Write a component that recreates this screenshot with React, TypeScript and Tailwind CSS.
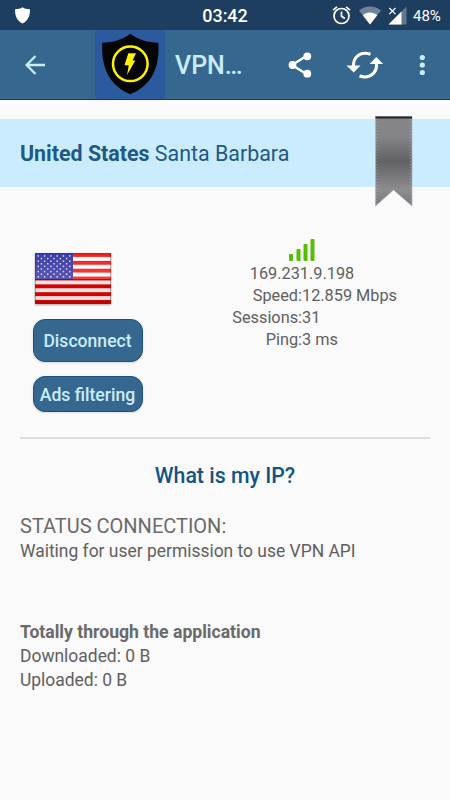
import React from 'react';

const STATS = [
  { label: 'Speed:', value: '12.859 Mbps' },
  { label: 'Sessions:', value: '31' },
  { label: 'Ping:', value: '3 ms' },
];

const StatusBar: React.FC = () => (
  <div className="relative h-[30px] bg-[#1e3e5f] flex items-center justify-between pl-[15px] pr-[10px] text-white">
    <svg className="w-[15px] h-[17px]" viewBox="0 0 15 17" fill="white">
      <path d="M7.500 .3C9.500 1.700 12 2.200 14.900 2.300C15.200 9 13 13.500 7.500 16.600C2 13.500-.2 9 .1 2.300C3 2.200 5.500 1.700 7.500 .3Z" />
    </svg>
    <span className="absolute left-1/2 -translate-x-1/2 pt-px text-[18px] leading-[30px] font-medium">03:42</span>
    <div className="flex items-center">
      <svg className="w-[20px] h-[20px]" viewBox="0 0 20 20" fill="none" stroke="white" strokeWidth="1.700">
        <circle cx="9.500" cy="11" r="7.500" />
        <path d="M9.500 6.500V11.200L12.800 13.500M1 5.200L5 1.900M18 5.200L14 1.900" />
      </svg>
      <svg className="ml-[7px] w-[22px] h-[19px]" viewBox="0 0 22 19">
        <path d="M0 4.500C6.500-.9 15.500-.9 22 4.500L11 18.500Z" fill="#718499" />
        <path d="M3.800 9.200C8 5.500 14 5.500 18.200 9.200L11 18.500Z" fill="white" />
      </svg>
      <svg className="ml-[7px] w-[19px] h-[19px]" viewBox="0 0 19 19">
        <path d="M18.500 .5V18.500H.5Z" fill="#61778e" />
        <path d="M13.500 5.500V18.500H.5Z" fill="white" />
        <path d="M1.300 2L7.500 8.200M7.500 2L1.300 8.200" stroke="white" strokeWidth="1.200" />
      </svg>
      <span className="ml-[6px] pt-px text-[15px] leading-[30px] w-[27px] whitespace-nowrap">48%</span>
    </div>
  </div>
);

const Toolbar: React.FC = () => (
  <div className="h-[70px] bg-[#36678f] border-b border-[#0b3b6c] flex items-center text-[#cbecff]">
    <svg className="ml-[25px] w-[20px] h-[20px]" viewBox="0 0 20 20" fill="none" stroke="currentColor" strokeWidth="2.300">
      <path d="M20 10H2M10.500 1L1.600 10L10.500 19" />
    </svg>
    <div className="ml-[50px] w-[70px] h-[69px] rounded-[3px] bg-[#2c5a9f] pt-[3px] pl-[6px]">
      <svg className="w-[60px] h-[63px]" viewBox="0 0 60 63">
        <path d="M29.300 .8C37.500 7 47 9.500 57.300 9.800C59 34 51 52.500 29.300 61.200C8 52.500 0 34 1.300 9.800C12 9.500 21 7 29.300 .8Z" fill="#050505" />
        <circle cx="29.300" cy="30.800" r="17.300" fill="none" stroke="#fff200" strokeWidth="2.500" />
        <path d="M27.300 20.300H35L31.500 27.500H34.300L26 42L27.800 32.300H23.500Z" fill="#fff200" />
      </svg>
    </div>
    <span className="ml-[10px] w-[112px] pt-[2px] text-[25px] leading-[30px] font-medium">VPN…</span>
    <svg className="w-[26px] h-[28px] text-white" viewBox="0 0 26 28" fill="currentColor">
      <path d="M19 5.200L5 14L19 22.800" fill="none" stroke="currentColor" strokeWidth="2.400" />
      <circle cx="20.300" cy="5.300" r="3.900" />
      <circle cx="5.500" cy="14" r="3.900" />
      <circle cx="20.300" cy="22.700" r="3.900" />
    </svg>
    <svg className="ml-[33px] w-[38px] h-[30px] text-white" viewBox="0 0 38 30" fill="none" stroke="currentColor" strokeWidth="3">
      <path d="M7.700 17C6.500 8.500 13 .8 24.500 4.200M30.300 12C32 21.500 25 29.500 13.500 26" />
      <path d="M.5 15.500H14.500L7.700 22.500ZM23.500 14H37.200L30.300 7Z" fill="currentColor" stroke="none" />
    </svg>
    <svg className="ml-[34px] w-[8px] h-[22px]" viewBox="0 0 8 22" fill="currentColor">
      <circle cx="4.300" cy="3.500" r="2.600" />
      <circle cx="4.300" cy="11" r="2.600" />
      <circle cx="4.300" cy="18.500" r="2.600" />
    </svg>
  </div>
);

const Ribbon: React.FC = () => (
  <svg className="absolute -top-[3px] left-[375px] w-[38px] h-[91px]" viewBox="0 0 38 91">
    <defs>
      <linearGradient id="ribbon" x1="0" y1="0" x2="0" y2="1">
        <stop offset="0" stopColor="#858589" />
        <stop offset=".22" stopColor="#858589" />
        <stop offset=".5" stopColor="#636367" />
        <stop offset=".82" stopColor="#8d8d91" />
        <stop offset="1" stopColor="#77777b" />
      </linearGradient>
    </defs>
    <path d="M.5 .5H37V90L18.500 74L.5 90Z" fill="url(#ribbon)" stroke="#a9b4bb" strokeWidth=".7" />
    <path d="M2 3V88M35.300 3V88" stroke="#b4b4b8" strokeWidth=".6" strokeDasharray="1 2" />
    <path d="M.5 1.500H37" stroke="#242427" strokeWidth="2" />
  </svg>
);

const Flag: React.FC = () => (
  <svg className="w-[76px] h-[51px] drop-shadow-[0_1px_1px_rgba(0,0,0,0.35)]" viewBox="0 0 76 51">
    <defs>
      <linearGradient id="gloss" x1="0" y1="0" x2="0" y2="1">
        <stop offset="0" stopColor="white" stopOpacity=".12" />
        <stop offset=".51" stopColor="white" stopOpacity=".25" />
        <stop offset=".52" stopColor="black" stopOpacity=".1" />
        <stop offset=".85" stopColor="black" stopOpacity=".1" />
        <stop offset="1" stopColor="black" stopOpacity=".22" />
      </linearGradient>
    </defs>
    <rect width="76" height="51" fill="white" />
    {[0, 2, 4, 6, 8, 10, 12].map((row) => (
      <rect key={row} y={row * 3.92} width="76" height="3.92" fill="#f00000" />
    ))}
    <rect width="38" height="26.500" fill="#20209c" />
    {[0, 1, 2, 3, 4, 5, 6, 7, 8].map((row) =>
      [0, 1, 2, 3, 4, 5].slice(row % 2).map((col) => (
        <rect key={`${row}-${col}`} x={2.5 + col * 6.3 - (row % 2) * 3.15} y={2.2 + row * 2.6} width="1.500" height="1.500" fill="#d0d0ee" />
      ))
    )}
    <rect width="76" height="51" fill="url(#gloss)" />
    <rect x=".5" y=".5" width="75" height="50" fill="none" stroke="#8b1520" strokeOpacity=".4" />
  </svg>
);

const App: React.FC = () => {
  return (
    <div className="w-full h-screen overflow-hidden bg-[#fafafa] font-['Roboto',sans-serif] text-[#606060]">
      <StatusBar />
      <Toolbar />

      <div className="relative mt-[19px] h-[68px] bg-[#cbecff] px-5 flex items-center text-[21.4px] text-[#205887]">
        <p className="whitespace-pre pt-[3px]"><b className="font-bold">United States</b> Santa Barbara</p>
        <Ribbon />
      </div>

      <div className="flex h-[250px] mx-5 border-b-2 border-[#dedede] box-content">
        <div className="flex flex-col pt-[66px] pl-[12.5px] w-[192px]">
          <div className="pl-[2px] h-[51px]"><Flag /></div>
          <button className="mt-[15px] pt-[2px] w-[110px] h-[43px] rounded-[12px] bg-[#36678f] border border-[#1b527f] text-[#cbecff] text-[17.6px] font-medium shadow-sm">Disconnect</button>
          <button className="mt-[14px] pt-[3px] w-[110px] h-[36px] rounded-[12px] bg-[#36678f] border border-[#1b527f] text-[#cbecff] text-[17.6px] font-medium shadow-sm whitespace-nowrap flex items-center justify-center">Ads filtering</button>
        </div>
        <div className="pt-[51px] w-[180px] flex flex-col items-center text-[16.3px] leading-[22px]">
          <svg className="mb-px w-[26px] h-[24px]" viewBox="0 0 26 24" fill="#56bf05">
            <rect x="0" y="16" width="4" height="7" rx="1" />
            <rect x="7.500" y="11" width="4" height="12" rx="1" />
            <rect x="14.500" y="6" width="4" height="17" rx="1" />
            <rect x="21.500" y="1" width="4" height="22" rx="1" />
          </svg>
          <span>169.231.9.198</span>
          {STATS.map(({ label, value }) => (
            <div key={label} className="w-full grid grid-cols-2">
              <span className="text-right">{label}</span>
              <span className="whitespace-nowrap">{value}</span>
            </div>
          ))}
        </div>
      </div>

      <h2 className="mt-[22px] text-center text-[21.3px] leading-[30px] font-medium text-[#145388]">What is my IP?</h2>

      <div className="mt-[22px] px-5 text-[17.45px] leading-[24px]">
        <p className="text-[20px] leading-[26px] text-[#6a6a6a]">STATUS CONNECTION:</p>
        <p>Waiting for user permission to use VPN API</p>
        <p className="mt-[57px] text-[17.6px] font-bold text-[#6a6a6a]">Totally through the application</p>
        <p>Downloaded: 0 B</p>
        <p>Uploaded: 0 B</p>
      </div>
    </div>
  );
};

export default App;
